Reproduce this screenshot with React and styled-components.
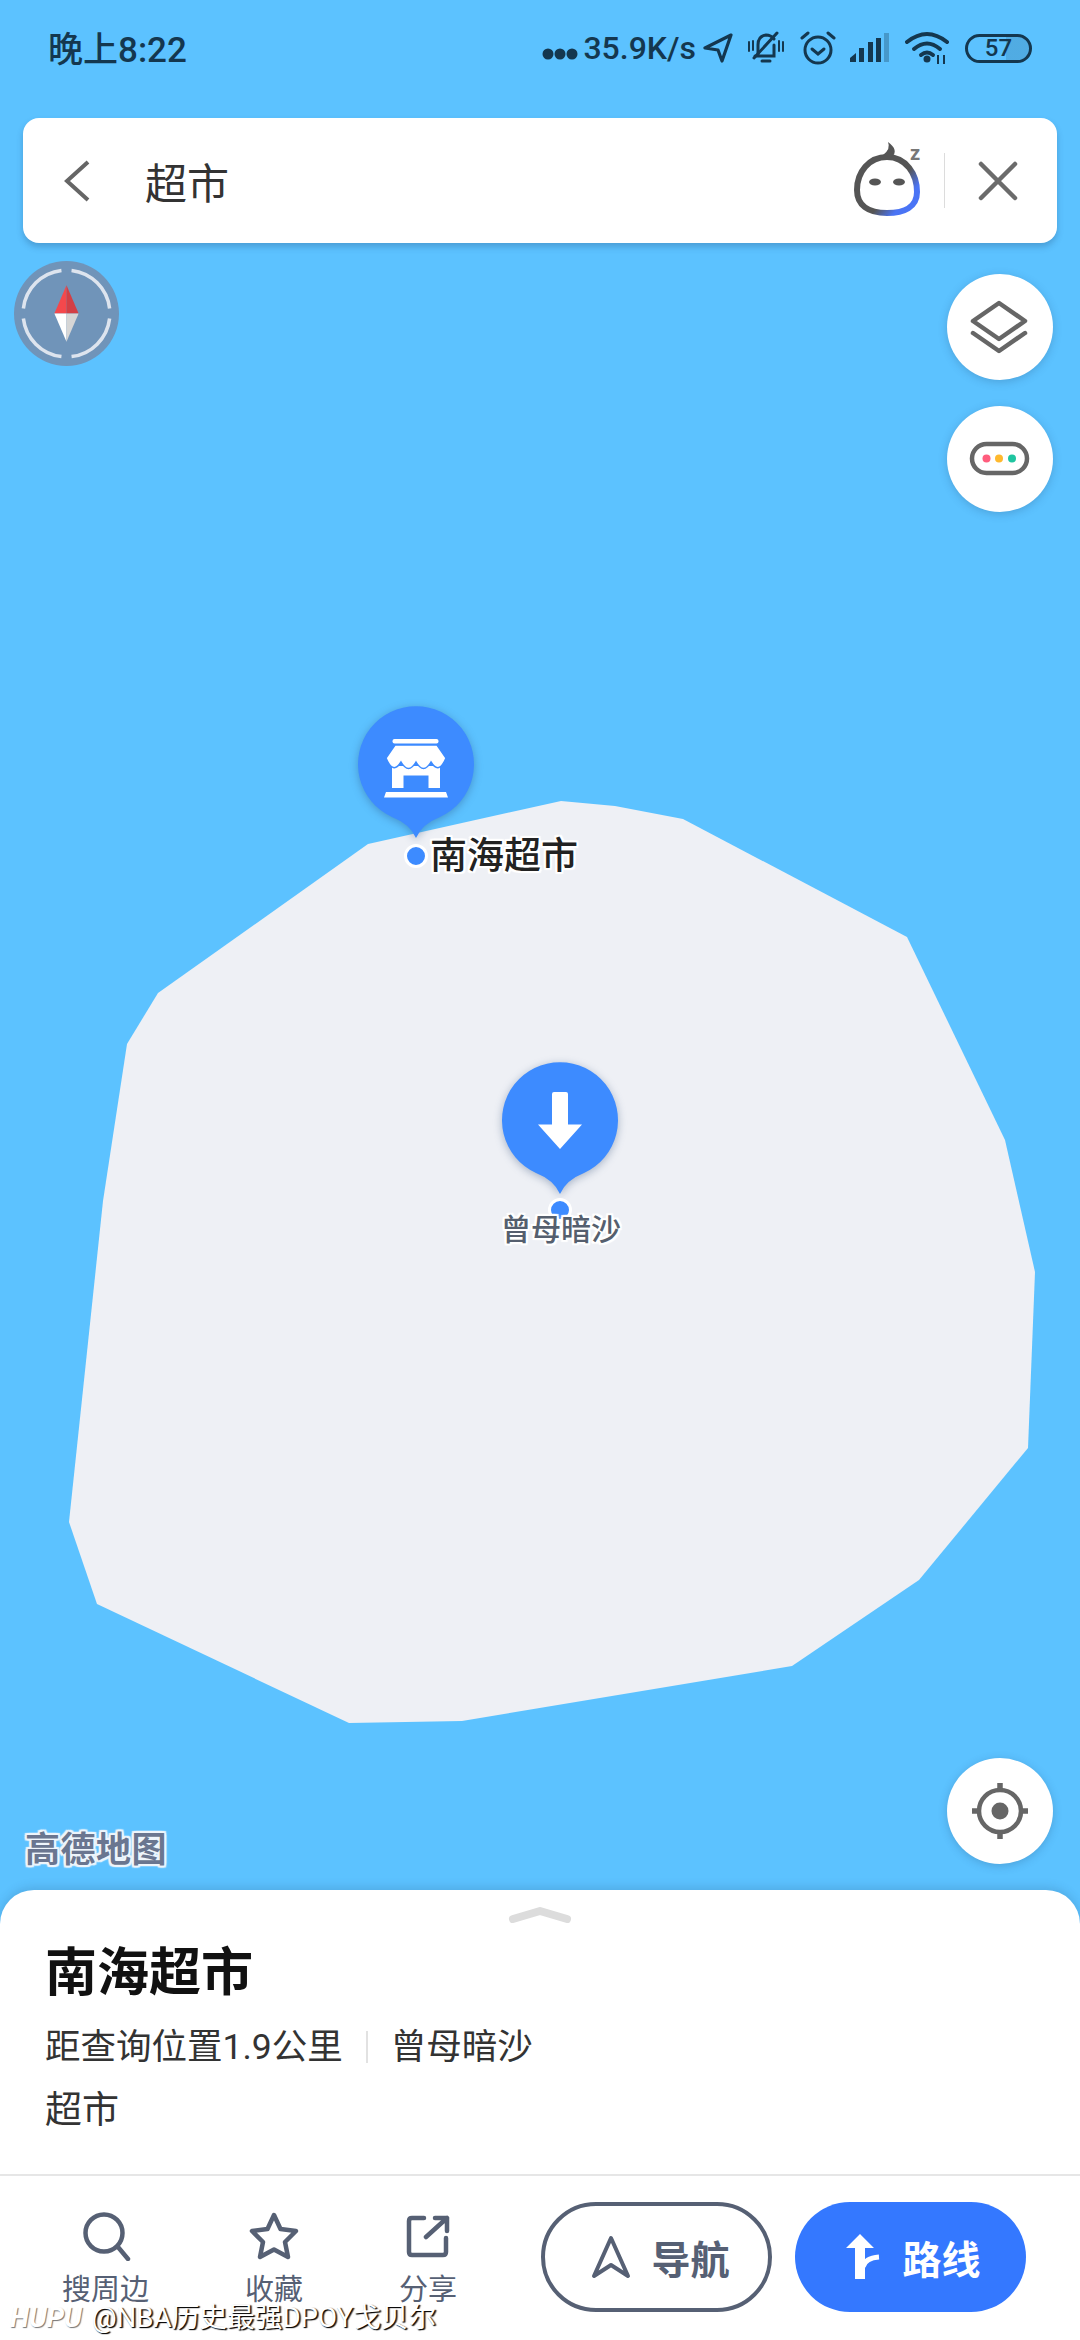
import styled, { createGlobalStyle } from "styled-components";

const sansFont = `Roboto, "Noto Sans CJK SC", sans-serif`;
const inkColor = "#566074";
const iconGray = "#666666";
const pinBlue = "#3d8bff";
const statusInk = "#14374f";

const GlobalStyle = createGlobalStyle`
  html, body {
    margin: 0;
    padding: 0;
    background: #5cc2ff;
  }
  * {
    box-sizing: border-box;
  }
`;

const Screen = styled.div`
  position: relative;
  width: 1080px;
  height: 2340px;
  overflow: hidden;
  display: flex;
  flex-direction: column;
  background: #5cc2ff;
  font-family: ${sansFont};
`;

const MapLayer = styled.div`
  position: absolute;
  inset: 0;
`;

const LandSvg = styled.svg`
  position: absolute;
  left: 0;
  top: 0;
`;

const Pin = styled.div`
  position: absolute;
  left: ${(p) => p.$x - 60}px;
  top: ${(p) => p.$y - 60}px;
  width: 120px;
  height: 140px;
  filter: drop-shadow(0 2px 4px rgba(30, 60, 110, 0.35));
`;

const PinDot = styled.div`
  position: absolute;
  left: ${(p) => p.$x - 12}px;
  top: ${(p) => p.$y - 12}px;
  width: 24px;
  height: 24px;
  border-radius: 50%;
  background: ${pinBlue};
  border: 3px solid #fff;
`;

const PlaceLabel = styled.div`
  position: absolute;
  left: ${(p) => p.$x}px;
  top: ${(p) => p.$y}px;
  font-size: ${(p) => p.$size}px;
  line-height: 1.2;
  font-weight: 500;
  white-space: nowrap;
  color: ${(p) => p.$color};
  text-shadow: 2px 0 1px #fff, -2px 0 1px #fff, 0 2px 1px #fff, 0 -2px 1px #fff,
    2px 2px 1px #fff, -2px -2px 1px #fff, 2px -2px 1px #fff, -2px 2px 1px #fff;
`;

const StatusBar = styled.div`
  position: relative;
  height: 96px;
  flex: none;
  padding: 0 48px;
  display: flex;
  align-items: center;
  justify-content: space-between;
  color: ${statusInk};
`;

const Clock = styled.div`
  margin-bottom: 4px;
  font-size: 35px;
  font-weight: 500;
`;

const StatusRight = styled.div`
  display: flex;
  align-items: center;
`;

const Speed = styled.span`
  font-size: 32px;
  font-weight: 500;
  margin: 0 7px 0 5px;
`;

const StatusIcon = styled.svg`
  display: block;
  flex: none;
  margin-left: ${(p) => p.$gap || 0}px;
  margin-top: ${(p) => p.$drop || 0}px;
`;

const Battery = styled.div`
  width: 67px;
  height: 29px;
  margin-left: 14px;
  border: 3.5px solid ${statusInk};
  border-radius: 15px;
  font-size: 24px;
  font-weight: 500;
  line-height: 22px;
  text-align: center;
  background: linear-gradient(to right, transparent 62%, rgba(20, 55, 80, 0.16) 62%);
`;

const SearchBar = styled.div`
  position: relative;
  flex: none;
  height: 125px;
  margin: 22px 23px 0;
  padding: 0 39px 0 40px;
  background: #fff;
  border-radius: 16px;
  box-shadow: 0 4px 6px rgba(30, 70, 110, 0.28);
  display: flex;
  align-items: center;
`;

const SearchText = styled.div`
  flex: 1;
  margin-left: 54px;
  font-size: 42px;
  color: #333;
`;

const SearchDivider = styled.div`
  width: 1px;
  height: 55px;
  margin: 0 33px 0 18px;
  background: #dcdcdc;
`;

const MapControls = styled.div`
  position: relative;
  flex: 1;
  min-height: 0;
  padding: 18px 27px 26px 14px;
  display: flex;
  flex-direction: column;
  justify-content: space-between;
`;

const ControlsRow = styled.div`
  display: flex;
  justify-content: space-between;
  align-items: ${(p) => p.$align || "flex-start"};
`;

const ButtonStack = styled.div`
  display: flex;
  flex-direction: column;
  gap: 26px;
  margin-top: 13px;
`;

const RoundButton = styled.div`
  width: 106px;
  height: 106px;
  border-radius: 50%;
  background: #fff;
  box-shadow: 0 2px 8px rgba(30, 70, 110, 0.25);
`;

const MapLogo = styled.div`
  margin: 0 0 -6px 11px;
  font-size: 35px;
  line-height: 38px;
  font-weight: 700;
  letter-spacing: 0.5px;
  color: #6a7690;
  text-shadow: 2px 0 1px #eef5fb, -2px 0 1px #eef5fb, 0 2px 1px #eef5fb, 0 -2px 1px #eef5fb,
    2px 2px 1px #eef5fb, -2px -2px 1px #eef5fb, 2px -2px 1px #eef5fb, -2px 2px 1px #eef5fb;
`;

const Sheet = styled.div`
  position: relative;
  flex: none;
  height: 450px;
  background: #fff;
  border-radius: 34px 34px 0 0;
  box-shadow: 0 -3px 10px rgba(30, 70, 110, 0.18);
  display: flex;
  flex-direction: column;
`;

const SheetInfo = styled.div`
  height: 286px;
  flex: none;
  padding: 0 45px;
  border-bottom: 2px solid #e6e6e6;
`;

const Handle = styled.svg`
  display: block;
  margin: 16px auto 0;
`;

const PlaceTitle = styled.h1`
  margin: 17px 0 0;
  font-size: 52px;
  line-height: 66px;
  font-weight: 700;
  color: #111;
`;

const MetaRow = styled.div`
  display: flex;
  align-items: center;
  margin-top: 15px;
  font-size: 35.5px;
  line-height: 50px;
  color: #333;
`;

const MetaDivider = styled.span`
  width: 2px;
  height: 32px;
  margin: 0 23px 0 23px;
  background: #e2e2e2;
`;

const Category = styled.div`
  margin-top: 14px;
  font-size: 37px;
  line-height: 50px;
  color: #333;
`;

const ActionBar = styled.div`
  flex: 1;
  padding: 26px 54px 0 62px;
  display: flex;
  align-items: flex-start;
  justify-content: space-between;
`;

const ActionItems = styled.div`
  display: flex;
  gap: 96px;
  padding-top: 9px;
`;

const ActionItem = styled.div`
  display: flex;
  flex-direction: column;
  align-items: center;
`;

const ActionLabel = styled.span`
  margin-top: 12px;
  font-size: 29px;
  line-height: 34px;
  color: ${inkColor};
  white-space: nowrap;
`;

const RouteButtons = styled.div`
  display: flex;
  gap: 23px;
`;

const PillButton = styled.div`
  width: 231px;
  height: 110px;
  border-radius: 55px;
  padding-left: ${(p) => (p.$primary ? 6 : 8)}px;
  display: flex;
  align-items: center;
  justify-content: center;
  gap: ${(p) => (p.$primary ? 22 : 20)}px;
  font-size: 39px;
  font-weight: 700;
  color: ${(p) => (p.$primary ? "#fff" : inkColor)};
  background: ${(p) => (p.$primary ? "#3478ff" : "#fff")};
  border: ${(p) => (p.$primary ? "none" : `4px solid ${inkColor}`)};
`;

const Watermark = styled.div`
  position: absolute;
  left: 10px;
  bottom: 6px;
  font-size: 27.7px;
  line-height: 32px;
  white-space: nowrap;
  color: #fff;
  text-shadow: 1px 1px 1px #000, 2px 1px 1px rgba(0, 0, 0, 0.6);
`;

const WatermarkBrand = styled.span`
  font-style: italic;
  font-weight: 700;
  margin-right: 10px;
  text-shadow: 1px 1px 1px rgba(0, 0, 0, 0.55);
`;

const landPoints =
  "368,844 561,801 615,806 683,819 907,937 1005,1140 1035,1272 1028,1448 919,1580 792,1666 462,1721 349,1723 97,1604 69,1522 103,1201 127,1044 158,993";

const pinPath = "M60 134Q66 120 84 113A58 58 0 1 0 36 113Q54 120 60 134Z";

const StorePin = () => (
  <svg width="120" height="140" viewBox="0 0 120 140">
    <path d={pinPath} fill={pinBlue} />
    <rect x="36.5" y="35" width="46" height="4.5" rx="2" fill="#fff" />
    <path d="M36 62V84H47.5V71.5H72.5V84H84V62Z" fill="#fff" />
    <path
      d="M39 41H81L90 54Q83 71 75 58Q67.5 71 60 58Q52.5 71 45 58Q37 71 30 54Z"
      fill="#fff"
      stroke={pinBlue}
      strokeWidth="1.5"
    />
    <path d="M30 88H90L92 93.5H28Z" fill="#fff" />
  </svg>
);

const ArrowPin = () => (
  <svg width="120" height="140" viewBox="0 0 120 140">
    <path d={pinPath} fill={pinBlue} />
    <path
      d="M52 34Q52 32 54 32H66Q68 32 68 34V64.5H82L60 89L38 64.5H52Z"
      fill="#fff"
    />
  </svg>
);

const BackIcon = () => (
  <svg width="28" height="44" viewBox="0 0 28 44">
    <path d="M25 3L4 22L25 41" fill="none" stroke="#666" strokeWidth="4" />
  </svg>
);

const CloseIcon = () => (
  <svg width="40" height="40" viewBox="0 0 40 40">
    <path d="M3 3L37 37M37 3L3 37" stroke="#6b6b6b" strokeWidth="4.5" strokeLinecap="round" />
  </svg>
);

const AssistantIcon = () => (
  <svg width="72" height="76" viewBox="0 0 72 76" style={{ marginBottom: 2 }}>
    <defs>
      <linearGradient id="headStroke" x1="0.1" y1="0.35" x2="0.85" y2="0.95">
        <stop offset="0.55" stopColor="#555" />
        <stop offset="0.85" stopColor="#4a74f5" />
      </linearGradient>
    </defs>
    <path
      d="M33 15C52 15 63 32 63 50C63 65 50 71 33 71C14 71 3 63 3 48C3 30 15 15 33 15Z"
      fill="none"
      stroke="url(#headStroke)"
      strokeWidth="6"
    />
    <path d="M29 13Q37 7 34 0Q45 8 38 15Z" fill="#555" />
    <ellipse cx="21" cy="40" rx="6" ry="3.5" fill="#555" />
    <ellipse cx="45" cy="40" rx="6" ry="3.5" fill="#555" />
    <text x="56" y="18" fontFamily="Roboto, sans-serif" fontSize="20" fontWeight="700" fill="#777">
      z
    </text>
  </svg>
);

const Compass = () => (
  <svg width="105" height="105" viewBox="0 0 104 104">
    <circle cx="52" cy="52" r="52" fill="#7094b9" />
    <g fill="none" stroke="#dde4ee" strokeWidth="3.5">
      <path d="M47 9.3A43 43 0 0 0 9.3 47" />
      <path d="M57 9.3A43 43 0 0 1 94.7 47" />
      <path d="M47 94.7A43 43 0 0 1 9.3 57" />
      <path d="M57 94.7A43 43 0 0 0 94.7 57" />
    </g>
    <path d="M52 24L40 52H52Z" fill="#f4484c" />
    <path d="M52 24L64 52H52Z" fill="#d33f45" />
    <path d="M52 80L40 52H52Z" fill="#fff" />
    <path d="M52 80L64 52H52Z" fill="#d6d6d6" />
  </svg>
);

const LayersIcon = () => (
  <svg width="106" height="106" viewBox="0 0 106 106">
    <g fill="none" stroke={iconGray} strokeWidth="4.5" strokeLinecap="round" strokeLinejoin="round">
      <path d="M52 29L78 47L52 65L26 47Z" />
      <path d="M26 59L52 77L78 59" />
    </g>
  </svg>
);

const TrafficIcon = () => (
  <svg width="106" height="106" viewBox="0 0 106 106">
    <rect x="25" y="38" width="55" height="29" rx="14.5" fill="none" stroke={iconGray} strokeWidth="4.5" />
    <circle cx="39.5" cy="52.5" r="4" fill="#ff5d7d" />
    <circle cx="52" cy="52.5" r="4" fill="#ffb92e" />
    <circle cx="65" cy="52.5" r="4" fill="#1fc5a0" />
  </svg>
);

const LocateIcon = () => (
  <svg width="106" height="106" viewBox="0 0 106 106">
    <circle cx="53" cy="53" r="21" fill="none" stroke={iconGray} strokeWidth="4.5" />
    <circle cx="53" cy="53" r="8.5" fill={iconGray} />
    <path d="M53 25V33M53 73V81M25 53H33M73 53H81" stroke={iconGray} strokeWidth="5.5" />
  </svg>
);

const SearchIcon = () => (
  <svg width="50" height="50" viewBox="0 0 50 50">
    <circle cx="23" cy="22" r="18.5" fill="none" stroke={inkColor} strokeWidth="4.5" />
    <path d="M37 36L47 48" stroke={inkColor} strokeWidth="4.5" strokeLinecap="round" />
  </svg>
);

const StarIcon = () => (
  <svg width="52" height="50" viewBox="0 0 52 50">
    <path
      d="M26 4L32.5 18L48 20L37 31L40 46L26 38.5L12 46L15 31L4 20L19.5 18Z"
      fill="none"
      stroke={inkColor}
      strokeWidth="4.5"
      strokeLinejoin="round"
    />
  </svg>
);

const ShareIcon = () => (
  <svg width="44" height="50" viewBox="0 0 44 50">
    <g fill="none" stroke={inkColor} strokeWidth="4.5" strokeLinecap="round" strokeLinejoin="round">
      <path d="M18 7H6Q3 7 3 10V41Q3 44 6 44H37Q40 44 40 41V27" />
      <path d="M20 26L41 7M29 7H41V20" />
    </g>
  </svg>
);

const NavIcon = () => (
  <svg width="40" height="44" viewBox="0 0 40 44">
    <path
      d="M20 3L37 41L20 30L3 41Z"
      fill="none"
      stroke={inkColor}
      strokeWidth="4"
      strokeLinejoin="round"
    />
  </svg>
);

const RouteIcon = () => (
  <svg width="34" height="46" viewBox="0 0 34 46">
    <path d="M14 0L28 14H19V45H9V14H0Z" fill="#fff" />
    <path d="M17 33Q19 24 33 23" fill="none" stroke="#fff" strokeWidth="5" />
  </svg>
);

const App = () => {
  return (
    <>
      <GlobalStyle />
      <Screen>
        <MapLayer>
          <LandSvg width="1080" height="2340" viewBox="0 0 1080 2340">
            <polygon points={landPoints} fill="#eef0f5" />
          </LandSvg>
          <Pin $x={416} $y={764}>
            <StorePin />
          </Pin>
          <PinDot $x={416} $y={856} />
          <PlaceLabel $x={430} $y={835} $size={37} $color="#222">
            南海超市
          </PlaceLabel>
          <Pin $x={560} $y={1120}>
            <ArrowPin />
          </Pin>
          <PinDot $x={560} $y={1210} />
          <PlaceLabel $x={501} $y={1212} $size={30} $color="#555f6e">
            曾母暗沙
          </PlaceLabel>
        </MapLayer>

        <StatusBar>
          <Clock>晚上8:22</Clock>
          <StatusRight>
            <StatusIcon $drop={12} width="36" height="12" viewBox="0 0 36 12">
              <circle cx="6" cy="6" r="5.5" fill={statusInk} />
              <circle cx="18" cy="6" r="5.5" fill={statusInk} />
              <circle cx="30" cy="6" r="5.5" fill={statusInk} />
            </StatusIcon>
            <Speed>35.9K/s</Speed>
            <StatusIcon width="30" height="30" viewBox="0 0 30 30">
              <path d="M28 2L2 15L15 17L19 28Z" fill="none" stroke={statusInk} strokeWidth="3.2" strokeLinejoin="round" />
            </StatusIcon>
            <StatusIcon $gap={15} width="36" height="34" viewBox="0 0 36 34">
              <g fill="none" stroke={statusInk} strokeWidth="3" strokeLinecap="round">
                <path d="M10 24V14Q10 5 18 4Q23 4 26 8M26 14V25H7" />
                <path d="M6 27L29 2" />
                <path d="M1 11V20M35 11V20M5 10V19M31 10V20" strokeWidth="2" />
                <path d="M14 30H22" />
              </g>
            </StatusIcon>
            <StatusIcon $gap={16} width="36" height="34" viewBox="0 0 36 34">
              <g fill="none" stroke={statusInk} strokeWidth="3" strokeLinecap="round">
                <circle cx="18" cy="19" r="13" />
                <path d="M12 18L18 23L24 18" />
                <path d="M2 7L8 2M34 7L28 2" />
              </g>
            </StatusIcon>
            <StatusIcon $gap={13} width="40" height="30" viewBox="0 0 40 30">
              <path d="M1 25L7 20V29H1Z" fill={statusInk} />
              <rect x="10" y="15" width="5" height="14" fill={statusInk} />
              <rect x="19" y="9" width="5" height="20" fill={statusInk} />
              <rect x="27" y="5" width="5" height="24" fill={statusInk} />
              <rect x="35" y="0" width="5" height="29" fill={statusInk} opacity="0.3" />
            </StatusIcon>
            <StatusIcon $gap={16} width="46" height="34" viewBox="0 0 46 34">
              <g fill="none" stroke={statusInk} strokeWidth="4" strokeLinecap="round">
                <path d="M2 11Q22 -5 42 11" />
                <path d="M9 18Q22 7 35 18" />
                <path d="M16 24Q22 19 28 24" />
              </g>
              <circle cx="22" cy="28" r="3.5" fill={statusInk} />
              <path d="M33 24V33M39 24V33" stroke={statusInk} strokeWidth="2" />
            </StatusIcon>
            <Battery>57</Battery>
          </StatusRight>
        </StatusBar>

        <SearchBar>
          <BackIcon />
          <SearchText>超市</SearchText>
          <AssistantIcon />
          <SearchDivider />
          <CloseIcon />
        </SearchBar>

        <MapControls>
          <ControlsRow>
            <Compass />
            <ButtonStack>
              <RoundButton>
                <LayersIcon />
              </RoundButton>
              <RoundButton>
                <TrafficIcon />
              </RoundButton>
            </ButtonStack>
          </ControlsRow>
          <ControlsRow $align="flex-end">
            <MapLogo>高德地图</MapLogo>
            <RoundButton>
              <LocateIcon />
            </RoundButton>
          </ControlsRow>
        </MapControls>

        <Sheet>
          <SheetInfo>
            <Handle width="64" height="18" viewBox="0 0 64 18">
              <path d="M5 13L32 5L59 13" fill="none" stroke="#dcdcdc" strokeWidth="8" strokeLinecap="round" strokeLinejoin="round" />
            </Handle>
            <PlaceTitle>南海超市</PlaceTitle>
            <MetaRow>
              距查询位置1.9公里
              <MetaDivider />
              曾母暗沙
            </MetaRow>
            <Category>超市</Category>
          </SheetInfo>
          <ActionBar>
            <ActionItems>
              <ActionItem>
                <SearchIcon />
                <ActionLabel>搜周边</ActionLabel>
              </ActionItem>
              <ActionItem>
                <StarIcon />
                <ActionLabel>收藏</ActionLabel>
              </ActionItem>
              <ActionItem>
                <ShareIcon />
                <ActionLabel>分享</ActionLabel>
              </ActionItem>
            </ActionItems>
            <RouteButtons>
              <PillButton>
                <NavIcon />
                导航
              </PillButton>
              <PillButton $primary>
                <RouteIcon />
                路线
              </PillButton>
            </RouteButtons>
          </ActionBar>
        </Sheet>

        <Watermark>
          <WatermarkBrand>HUPU</WatermarkBrand>@NBA历史最强DPOY戈贝尔
        </Watermark>
      </Screen>
    </>
  );
};

export default App;
